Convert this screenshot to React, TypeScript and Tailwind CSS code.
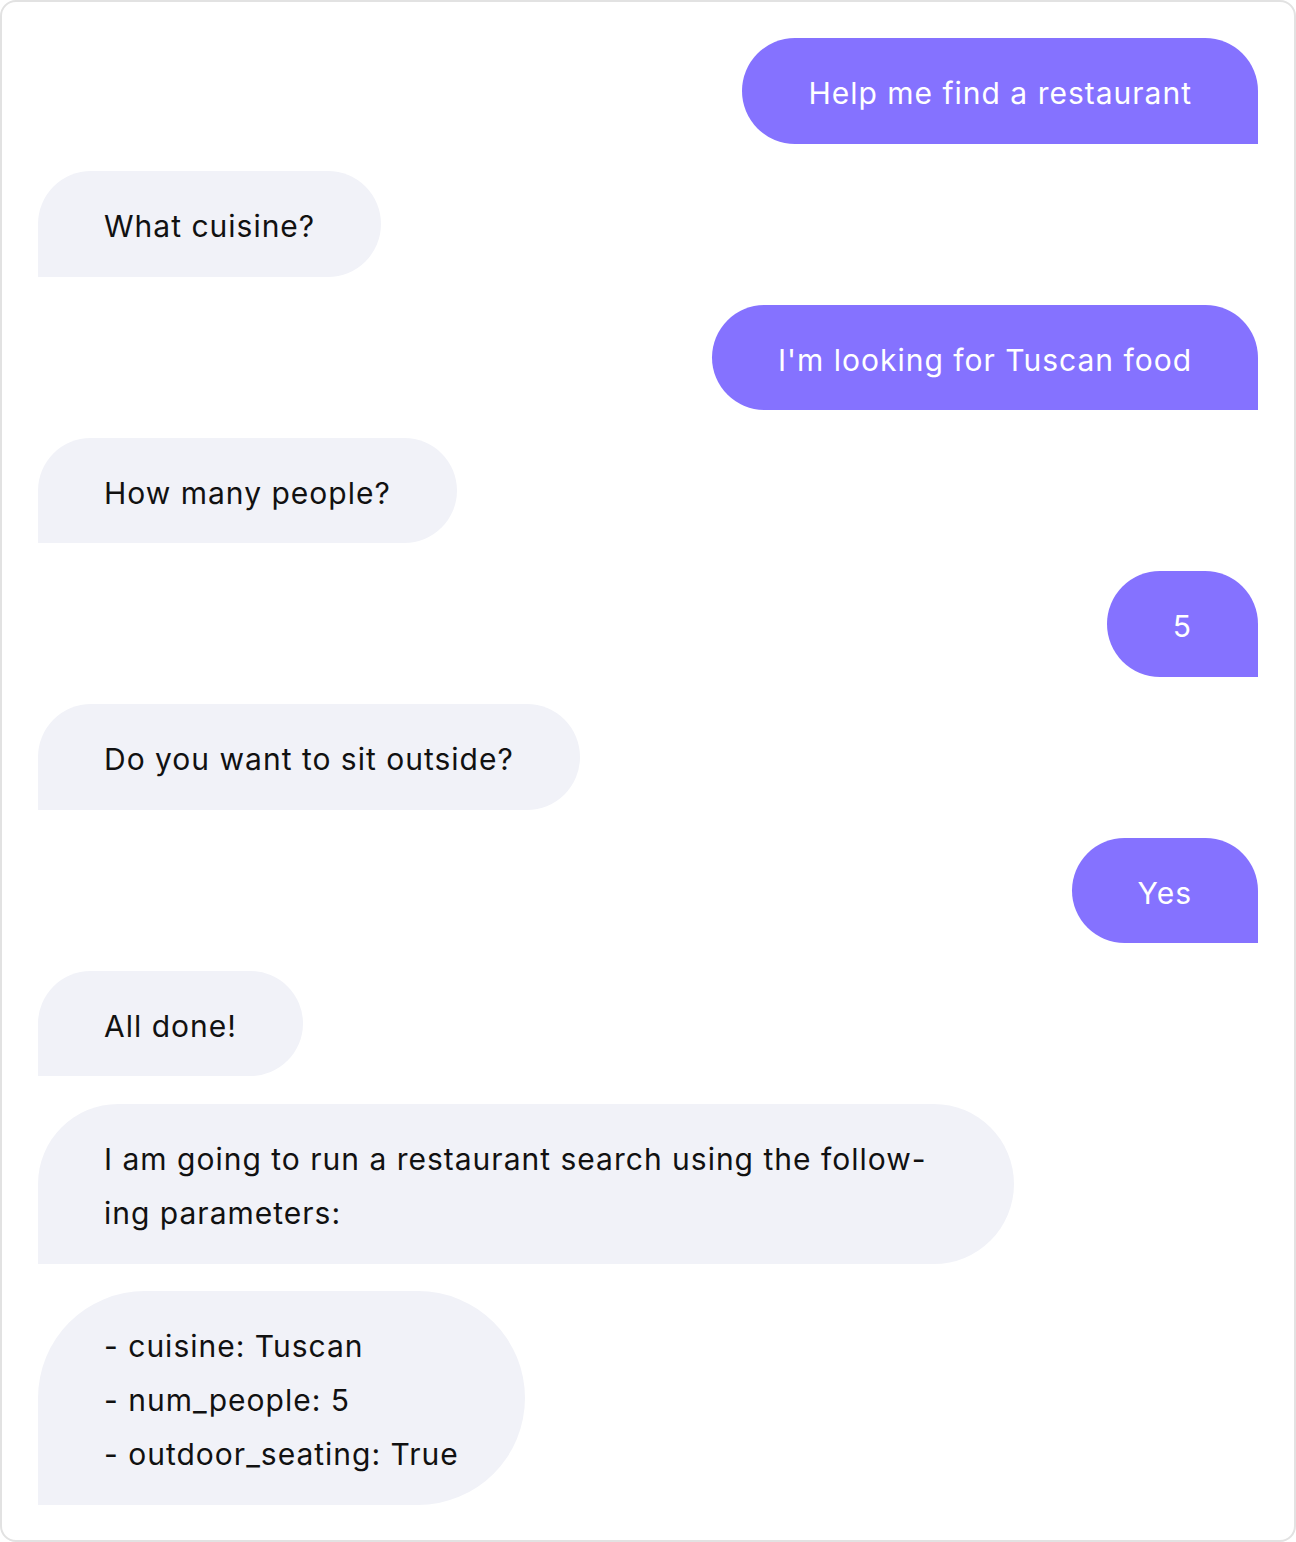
import React from "react";

type Msg = { from: "user" | "bot"; lines: string[]; wide?: boolean };

const messages: Msg[] = [
  { from: "user", lines: ["Help me find a restaurant"] },
  { from: "bot", lines: ["What cuisine?"] },
  { from: "user", lines: ["I'm looking for Tuscan food"] },
  { from: "bot", lines: ["How many people?"] },
  { from: "user", lines: ["5"] },
  { from: "bot", lines: ["Do you want to sit outside?"] },
  { from: "user", lines: ["Yes"] },
  { from: "bot", lines: ["All done!"] },
  {
    from: "bot",
    wide: true,
    lines: [
      "I am going to run a restaurant search using the follow-",
      "ing parameters:",
    ],
  },
  {
    from: "bot",
    lines: ["- cuisine: Tuscan", "- num_people: 5", "- outdoor_seating: True"],
  },
];

const Bubble = ({ msg }: { msg: Msg }) => {
  const isUser = msg.from === "user";
  return (
    <div className={`flex ${isUser ? "justify-end" : "justify-start"}`}>
      <div
        className={`${msg.wide ? "w-[80%]" : "max-w-[80%]"} ${
          isUser
            ? "rounded-full rounded-br-none bg-[#8572ff] text-white"
            : "rounded-full rounded-bl-none bg-[#f1f2f8] text-[#111111]"
        } px-[66px] pt-[28px] pb-[23.5px]`}
      >
        {msg.lines.map((line, i) => (
          <div
            key={i}
            className="whitespace-pre text-[30px] leading-[54px] tracking-[1px]"
          >
            {line}
          </div>
        ))}
      </div>
    </div>
  );
};

export default function App() {
  return (
    <div className="h-[1542px] w-[1296px] bg-white font-['Inter',sans-serif]">
      <div className="flex h-full flex-col gap-[27.75px] rounded-[16px] border-2 border-[#e2e2e2] p-[36px]">
        {messages.map((m, i) => (
          <Bubble key={i} msg={m} />
        ))}
      </div>
    </div>
  );
}
